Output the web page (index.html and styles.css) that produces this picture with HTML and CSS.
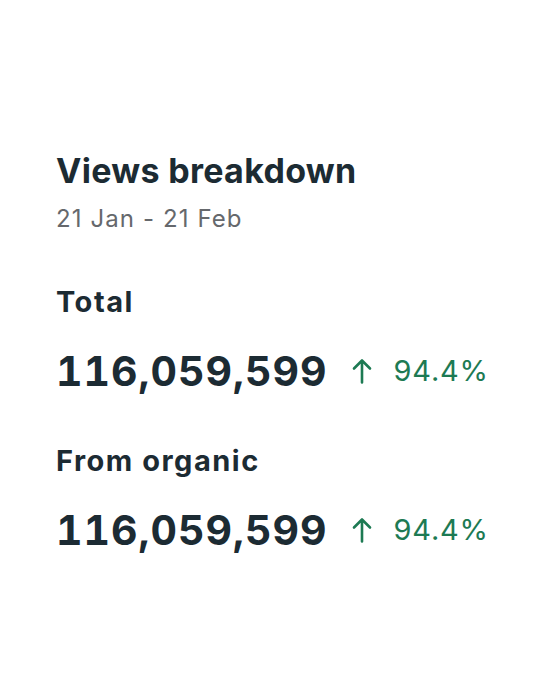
FILE: index.html
```html
<!DOCTYPE html>
<html lang="en">

<head>
  <meta charset="UTF-8" />
  <meta name="viewport" content="width=device-width, initial-scale=1.0" />
  <title>Views breakdown</title>
  <link rel="stylesheet" href="styles.css">
</head>

<body>
  <div class="card">
    <h1>Views breakdown</h1>
    <p class="range">21 Jan - 21 Feb</p>

    <div class="metric">
      <h2>Total</h2>
      <div class="row">
        <span class="value">116,059,599</span>
        <span class="change">
          <svg class="arrow" viewBox="0 0 20 26" width="20" height="26">
            <path d="M10 24.5V2.5M2 10.5l8-8 8 8" />
          </svg>
          94.4%
        </span>
      </div>
    </div>

    <div class="metric">
      <h2>From organic</h2>
      <div class="row">
        <span class="value">116,059,599</span>
        <span class="change">
          <svg class="arrow" viewBox="0 0 20 26" width="20" height="26">
            <path d="M10 24.5V2.5M2 10.5l8-8 8 8" />
          </svg>
          94.4%
        </span>
      </div>
    </div>
  </div>
</body>

</html>
```

FILE: styles.css
```css
* {
  box-sizing: border-box;
  margin: 0;
  padding: 0;
  font-family: 'Inter', sans-serif;
}

body {
  background: #fff;
  color: #1c2b33;
  width: 560px;
  height: 700px;
}

.card {
  padding: 151px 56px 0;
}

h1 {
  font-size: 34px;
  font-weight: 700;
  line-height: 40px;
  letter-spacing: 0.3px;
}

.range {
  margin-top: 13px;
  font-size: 24px;
  line-height: 30px;
  letter-spacing: 1.1px;
  color: #65686c;
}

.metric {
  margin-top: 50px;
}

.metric + .metric {
  margin-top: 48px;
}

h2 {
  font-size: 29px;
  font-weight: 700;
  line-height: 36px;
  letter-spacing: 1.5px;
}

.row {
  display: flex;
  align-items: center;
  margin-top: 27px;
}

.value {
  font-size: 41px;
  font-weight: 700;
  line-height: 48px;
  letter-spacing: 1px;
  font-variant-numeric: tabular-nums;
}

.change {
  display: flex;
  align-items: center;
  gap: 22px;
  margin-left: 24px;
  font-size: 29px;
  line-height: 36px;
  letter-spacing: 0.8px;
  color: #1d7a53;
}

.arrow {
  fill: none;
  stroke: currentColor;
  stroke-width: 2.6;
  stroke-linecap: round;
  stroke-linejoin: round;
}
```
